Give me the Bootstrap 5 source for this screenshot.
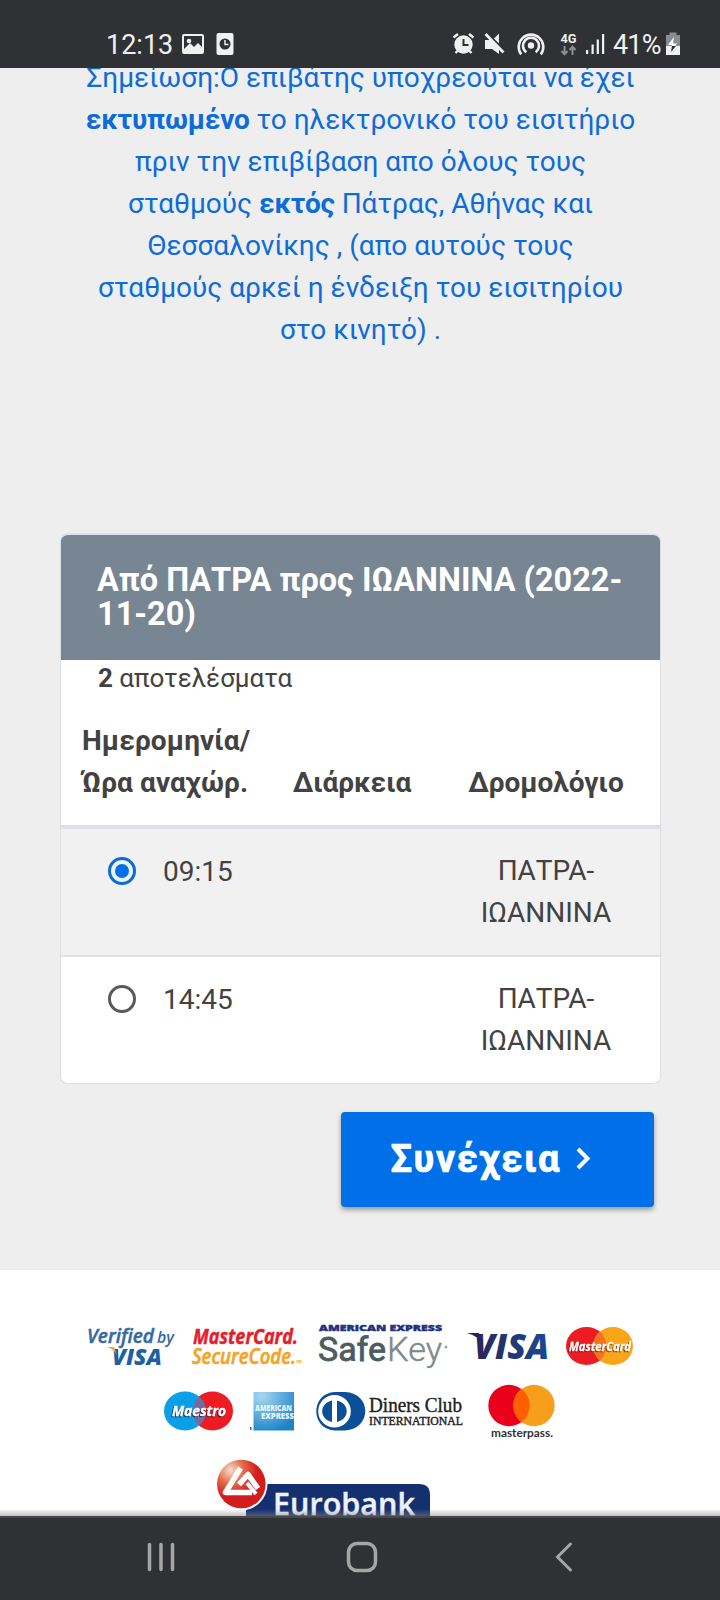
<!DOCTYPE html>
<html lang="el">
<head>
<meta charset="utf-8">
<title>Επιλογή δρομολογίου</title>
<link href="https://cdn.jsdelivr.net/npm/bootstrap@5.3.0/dist/css/bootstrap.min.css" rel="stylesheet">
<style>
body{font-family:Roboto,"Liberation Sans",sans-serif;background:#eee;color:#424242;width:720px;height:1600px;font-size:28px;line-height:42px}
svg{display:block;flex:none;overflow:visible}
.status-bar{height:68px;background:#303135;color:#f0f0f0;font-size:27px;line-height:34px;padding:28px 0 0 106px}
.page-view{height:1448px}
.note{color:#0d6cd8;margin-top:-11px;height:476px;white-space:nowrap;padding-left:1px}
.note b{letter-spacing:-.2px}
.trips{width:601px;margin-left:60px;height:551px;border:1px solid #dcdfe2;border-top:2px solid #dce3e9;border-radius:8px;overflow:hidden}
.trips-head{background:#788592;color:#fff;height:125px;padding:28px 0 0 36px;font-size:32.5px;line-height:34px;font-weight:700;white-space:nowrap}
.found{font-size:26px;height:50px;line-height:36px;padding-left:37px}
.trip-grid{display:grid;grid-template-columns:209px 164px 224px;white-space:nowrap}
.trip-labels{height:119px;border-bottom:4px solid #dee0e6;font-weight:700;padding-top:10px}
.trip-row{height:128px;border-bottom:2px solid #dee0e4;padding-top:21px}
.trip-row.picked{background:#f1f1f1}
.go-btn{width:313px;height:95px;margin:28px 0 0 341px;background:#006fe8;color:#fff;border-radius:4px;font-size:38px;font-weight:700;box-shadow:0 3px 5px rgba(0,0,0,.35)}
.partners{margin-top:63px;background:#fff;height:247px}
.bottom-nav{height:84px;background:#303135;border-top:2px solid #47484a}
.fade-edge{height:7px;left:0;right:0;bottom:84px;background:linear-gradient(rgba(150,150,150,0),rgba(130,130,130,.5))}
.ms{font-family:"Open Sans",sans-serif}
</style>
</head>
<body class="overflow-hidden position-relative">
<header class="status-bar d-flex">
  <span>12:13</span>
  <svg class="ms-auto" style="margin-top:-28px" width="540" height="68" viewBox="180 0 540 68" fill="#f0f0f0">
    <path fill-rule="evenodd" d="M184 34h18q2 0 2 2v16q0 2-2 2h-18q-2 0-2-2V36q0-2 2-2zm0 2v13l6-6 4 4 4-4 4 4v-11z"/><circle cx="189" cy="41" r="2.300"/>
    <rect x="216.500" y="33" width="17" height="22" rx="2"/><circle cx="225" cy="44" r="5.500" fill="#303135"/><path d="M225 40v4.500h3.500" fill="none" stroke="#f0f0f0" stroke-width="1.500"/>
    <circle cx="463.500" cy="44.500" r="9.200"/><path d="M463.500 39v6h5" stroke="#303135" stroke-width="2" fill="none"/><path d="m453.500 37.500 4.500-3.500m15.500 3.500-4.500-3.500M455.500 53l3-3m13 3-3-3" stroke="#f0f0f0" stroke-width="2.400"/>
    <path d="M485 40h5.500l8.500 8.300V54l-7-5h-7zM499 33.500v11l-5.500-5.500z"/><path d="m487.500 33.500 17.500 17.500" stroke="#303135" stroke-width="2"/><path d="m485.500 34 18 18.500" stroke="#f0f0f0" stroke-width="2.800"/>
    <circle cx="531" cy="45.500" r="3.200"/><g fill="none" stroke="#f0f0f0" stroke-width="2.600"><path d="M526.300 52.200a8 8 0 1 1 9.400 0"/><path d="M521.200 54.400a12.300 12.300 0 1 1 19.600 0"/></g>
    <text x="560.500" y="43" font-size="13" font-weight="700" textLength="16" lengthAdjust="spacingAndGlyphs">4G</text>
    <path d="M564.500 46v8m-3-3 3 3.300 3-3.300M572.500 55v-8m-3 3 3-3.300 3 3.300" fill="none" stroke="#8d8e90" stroke-width="2"/>
    <path d="M586 50h2.200v4H586zM591.500 44.500h2.200V54h-2.200zM596.700 39.500h2.200V54h-2.200zM602 34h2.200v20H602z"/>
    <text x="613" y="54" font-size="27" textLength="48.500">41%</text>
    <path d="M669.500 32.500h7V35h3.500v11h-14V35h3.500z" fill="#8b8c8e"/><path d="M666 46h14v9h-14z"/><path d="m674 37-6 8h4l-1 7 6-8.500h-4z" fill="#fff"/><path d="M672 46h4l-5 6z" fill="#303135"/>
  </svg>
</header>

<main class="page-view overflow-hidden">
  <div class="note text-center">Σημείωση:Ο επιβάτης υποχρεούται να έχει<br><b>εκτυπωμένο</b> το ηλεκτρονικό του εισιτήριο<br>πριν την επιβίβαση απο όλους τους<br>σταθμούς <b>εκτός</b> Πάτρας, Αθήνας και<br>Θεσσαλονίκης , (απο αυτούς τους<br>σταθμούς αρκεί η ένδειξη του εισιτηρίου<br>στο κινητό) .</div>

  <section class="trips bg-white">
    <div class="trips-head">Από ΠΑΤΡΑ προς ΙΩΑΝΝΙΝΑ (2022-<br>11-20)</div>
    <div class="found"><b>2</b> αποτελέσματα</div>
    <div class="trip-grid trip-labels">
      <div style="padding-left:21px;letter-spacing:.1px">Ημερομηνία/<br>Ώρα αναχώρ.</div>
      <div class="text-center"><br>Διάρκεια</div>
      <div class="text-center"><br>Δρομολόγιο</div>
    </div>
    <div class="trip-grid trip-row picked">
      <svg width="209" height="42" viewBox="0 0 209 42"><circle cx="61" cy="21" r="12.500" fill="#edf3fa" stroke="#0f6bd4" stroke-width="3"/><circle cx="61" cy="21" r="7" fill="#006fe8"/><text x="102" y="31" font-size="28" fill="#424242">09:15</text></svg>
      <div></div>
      <div class="text-center">ΠΑΤΡΑ-<br>ΙΩΑΝΝΙΝΑ</div>
    </div>
    <div class="trip-grid trip-row border-0">
      <svg width="209" height="42" viewBox="0 0 209 42"><circle cx="61" cy="21" r="12.500" fill="#fff" stroke="#5a5a5a" stroke-width="3"/><text x="102" y="31" font-size="28" fill="#424242">14:45</text></svg>
      <div></div>
      <div class="text-center">ΠΑΤΡΑ-<br>ΙΩΑΝΝΙΝΑ</div>
    </div>
  </section>

  <button class="go-btn border-0 d-flex align-items-center p-0" type="button">
    <svg width="313" height="95" viewBox="0 0 313 95" fill="#fff"><text x="49.500" y="60" stroke="#fff" stroke-width=".7" textLength="169">Συνέχεια</text><path d="m237 37 9.500 9.500-9.500 9.500" fill="none" stroke="#fff" stroke-width="4"/></svg>
  </button>

  <footer class="partners">
    <div class="d-flex" style="padding:50px 0 0 85px">
      <svg width="95" height="48" viewBox="85 1320 95 48" class="ms" font-style="italic"><text x="87" y="1343" font-size="20" font-weight="600" fill="#356a9f" stroke="#356a9f" stroke-width=".5" textLength="67" lengthAdjust="spacingAndGlyphs">Verified</text><text x="157" y="1343" font-size="16" font-weight="600" fill="#356a9f" textLength="17" lengthAdjust="spacingAndGlyphs">by</text><text x="112" y="1364.500" font-size="23.500" font-weight="800" fill="#1f5fa4" textLength="50" lengthAdjust="spacingAndGlyphs">VISA</text><path d="M107 1347h7l3 8q-3-6-10-8z" fill="#f3a73b"/></svg>
      <svg style="margin-left:10px" width="112" height="48" viewBox="190 1320 112 48" class="ms" font-style="italic" font-weight="700"><text x="193" y="1343.500" font-size="21" fill="#e31f2d" stroke="#e31f2d" stroke-width=".5" textLength="105" lengthAdjust="spacingAndGlyphs">MasterCard.</text><text x="192" y="1364" font-size="21" font-weight="600" fill="#f5a324" stroke="#f5a324" stroke-width=".6" textLength="104" lengthAdjust="spacingAndGlyphs">SecureCode.</text><text x="296" y="1363" font-size="4" fill="#f5a324">TM</text></svg>
      <svg style="margin-left:14px" width="136" height="48" viewBox="316 1320 136 48"><text x="319" y="1331" font-family="Open Sans" font-size="8.500" font-weight="800" fill="#23307a" stroke="#23307a" stroke-width=".4" textLength="123" lengthAdjust="spacingAndGlyphs">AMERICAN EXPRESS</text><text x="318" y="1361" font-size="33" font-weight="400" fill="#4c5c61" stroke="#4c5c61" stroke-width=".8" textLength="68" lengthAdjust="spacingAndGlyphs">Safe</text><text x="387" y="1361" font-size="33" font-weight="300" fill="#7d8a8e" stroke="#7d8a8e" stroke-width=".4" textLength="55" lengthAdjust="spacingAndGlyphs">Key</text><circle cx="446" cy="1347" r="1.500" fill="#9ba5a8"/></svg>
      <svg style="margin-left:13px" width="85" height="48" viewBox="465 1320 85 48"><defs><linearGradient id="vg"><stop stop-color="#2a2558"/><stop offset="1" stop-color="#174a94"/></linearGradient></defs><text x="474" y="1358.500" font-family="Open Sans" font-size="35" font-weight="800" font-style="italic" fill="url(#vg)" textLength="75" lengthAdjust="spacingAndGlyphs">VISA</text><path d="M467 1333h12l4 12q-4-9-16-12z" fill="#2a2558"/></svg>
      <svg style="margin-left:14px" width="72" height="48" viewBox="564 1320 72 48"><ellipse cx="586.500" cy="1346" rx="20.500" ry="19" fill="#ec1c24"/><ellipse cx="613" cy="1346" rx="20" ry="19" fill="#f9a51a"/><path d="M599.700 1331q13.500 15 0 30-13-15 0-30" fill="#f4731f"/><text x="569" y="1350.500" font-family="Open Sans" font-size="12.500" font-weight="700" font-style="italic" fill="#fff" stroke="#fff" stroke-width=".3" style="filter:drop-shadow(-1px 1px 0 rgba(90,30,0,.7))" textLength="62" lengthAdjust="spacingAndGlyphs">MasterCard</text></svg>
    </div>
    <div class="d-flex" style="padding:14px 0 0 162px">
      <svg width="74" height="62" viewBox="162 1382 74 62"><ellipse cx="212.500" cy="1411" rx="20.500" ry="19.500" fill="#ed1c24"/><ellipse cx="185" cy="1411" rx="21" ry="19.500" fill="#0a9fe6"/><path d="M199 1396q14 15 0 30-12-15 0-30" fill="#79689c"/><text x="172" y="1416" font-family="Open Sans" font-size="13.500" font-weight="700" font-style="italic" fill="#fff" stroke="#fff" stroke-width=".3" style="filter:drop-shadow(-1px 1px 0 rgba(30,20,50,.7))" textLength="54" lengthAdjust="spacingAndGlyphs">Maestro</text></svg>
      <svg style="margin-left:14px" width="48" height="62" viewBox="250 1382 48 62"><defs><radialGradient id="ag" cx=".2" cy=".1" r="1"><stop stop-color="#a5d8f2"/><stop offset="1" stop-color="#1b83c6"/></radialGradient></defs><path d="M253.500 1392H294v38.500h-40.500z" fill="url(#ag)"/><g font-family="Open Sans" font-size="8" font-weight="800" fill="#e8f5fc"><text x="255" y="1410.500" textLength="37" lengthAdjust="spacingAndGlyphs">AMERICAN</text><text x="261" y="1418.500" textLength="33" lengthAdjust="spacingAndGlyphs">EXPRESS</text></g><path d="M250 1427h1.500v3H250z" fill="#346c96"/></svg>
      <svg style="margin-left:16px" width="152" height="62" viewBox="314 1382 152 62"><path d="M335 1392h10c27 1 27 37 0 38.500h-10c-25-1-25-37.500 0-38.500z" fill="#0a4f98"/><circle cx="334.500" cy="1411.200" r="16.300" fill="#fff"/><path d="M332 1400.500v21.500c-13-3-13-18.500 0-21.500zM337 1400.500v21.500c13-3 13-18.500 0-21.500z" fill="#0a4f98"/><g font-family="Liberation Serif" fill="#222" stroke="#222" stroke-width=".4"><text x="369" y="1411.500" font-size="21" textLength="93" lengthAdjust="spacingAndGlyphs">Diners Club</text><text x="369" y="1424.500" font-size="11.500" textLength="94" lengthAdjust="spacingAndGlyphs">INTERNATIONAL</text></g></svg>
      <svg style="margin-left:20px" width="72" height="62" viewBox="486 1382 72 62"><circle cx="509" cy="1405.500" r="20.700" fill="#eb001b"/><circle cx="534" cy="1405.500" r="20.700" fill="#f79e1b"/><path d="M521.500 1389a20.700 20.700 0 0 1 0 33 20.700 20.700 0 0 1 0-33" fill="#ff5f00"/><text x="491" y="1436.500" font-family="Lato" font-size="12" font-weight="700" fill="#333" textLength="62" lengthAdjust="spacingAndGlyphs">masterpass.</text></svg>
    </div>
    <div class="d-flex" style="padding:12px 0 0 214px">
      <svg width="220" height="60" viewBox="214 1456 220 60"><defs><radialGradient id="eg" cx=".28" cy=".22" r=".55"><stop stop-color="#f9ddcf"/><stop offset=".5" stop-color="#e06c4c"/><stop offset="1" stop-color="#d21d1d"/></radialGradient></defs><path d="M246 1516v-32h173q11 0 11 11v21z" fill="#15306f"/><circle cx="241" cy="1484" r="26.500" fill="#fff"/><circle cx="241.300" cy="1484" r="24.300" fill="url(#eg)"/><path d="m240.500 1468-15 24.500H252M239 1484.500l9-10 10 14" fill="none" stroke="#fff" stroke-width="5.500" stroke-linejoin="round"/><path d="m247 1483 9 11" stroke="#fff" stroke-width="4"/><text x="273" y="1514.500" font-family="Open Sans" font-size="30" font-weight="600" fill="#eef2fa" stroke="#eef2fa" stroke-width=".4" textLength="142" lengthAdjust="spacingAndGlyphs">Eurobank</text></svg>
    </div>
  </footer>
</main>
<div class="fade-edge position-absolute"></div>
<nav class="bottom-nav">
  <svg width="720" height="82" viewBox="0 1518 720 82" fill="none" stroke="#a6a6a6" stroke-width="3.500" stroke-linecap="round"><path d="M149.500 1544.500v25M161 1544.500v25M172.500 1544.500v25"/><rect x="348.500" y="1543.500" width="27" height="27" rx="8.500"/><path d="m570.500 1544-13 13 13 13" stroke-width="3"/></svg>
</nav>
<script src="https://cdn.jsdelivr.net/npm/bootstrap@5.3.0/dist/js/bootstrap.bundle.min.js"></script>
</body>
</html>
